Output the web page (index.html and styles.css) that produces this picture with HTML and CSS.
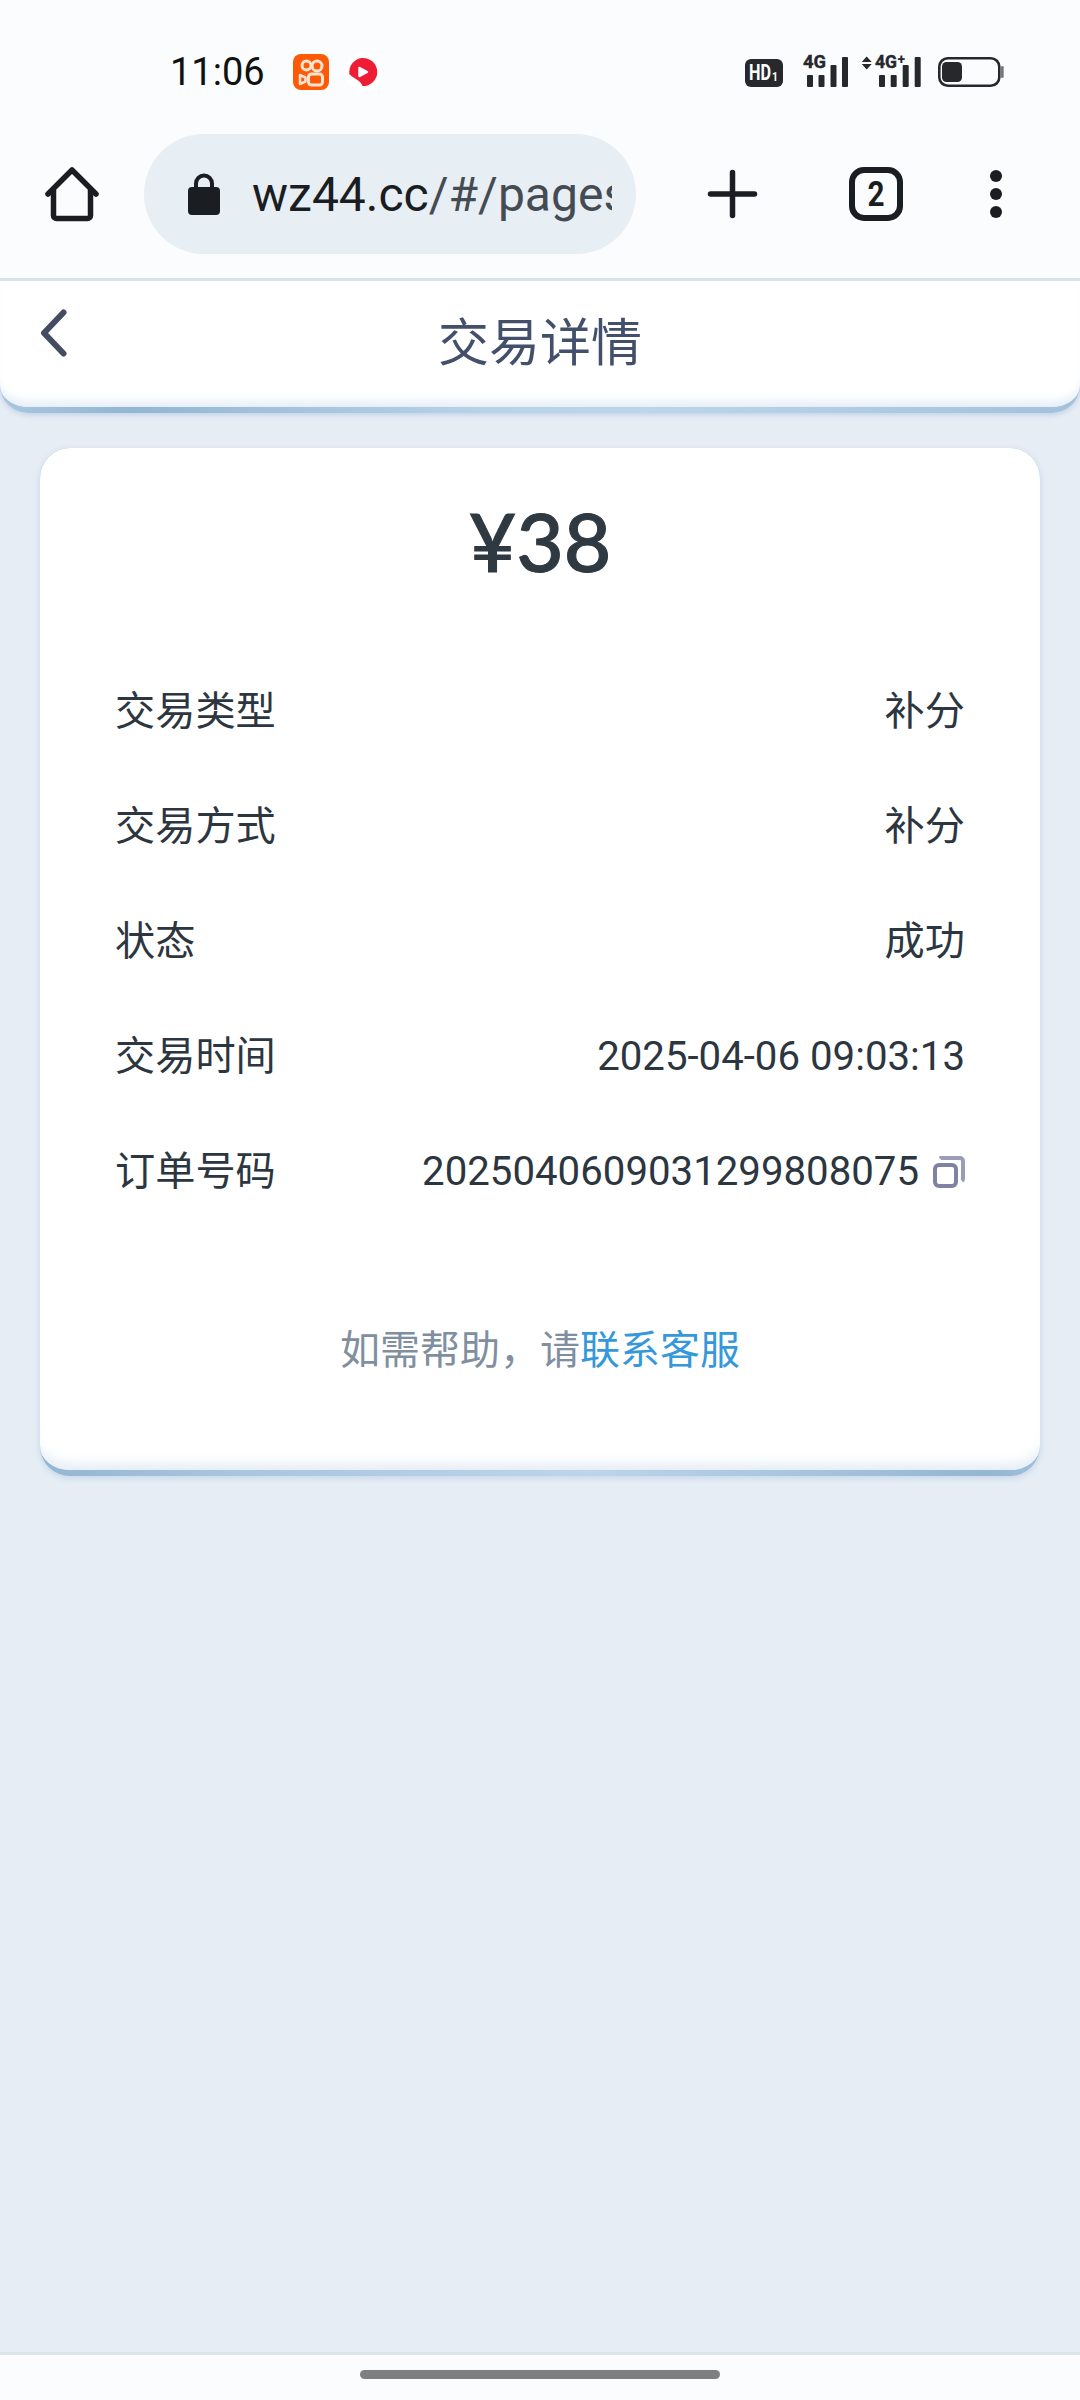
FILE: index.html
```html
<!DOCTYPE html>
<html lang="zh-CN">
<head>
    <meta charset="UTF-8">
    <meta name="viewport" content="width=device-width, initial-scale=1.0">
    <title>交易详情</title>
    <link rel="stylesheet" href="styles.css">
</head>
<body>
    <div class="status-bar">
        <div class="status-time">11:06</div>
        <svg class="app-icon" width="36" height="36" viewBox="0 0 36 36">
            <rect width="36" height="36" rx="8" fill="#fd5a08"/>
            <g fill="none" stroke="#fde3d2" stroke-width="3">
                <circle cx="13.500" cy="11.500" r="4.500"/>
                <circle cx="24" cy="12" r="5"/>
                <rect x="15.500" y="20" width="14" height="11" rx="3"/>
                <path d="M7 21l5.500 2.500v4L7 30z" stroke-linejoin="round" stroke-width="2.500"/>
            </g>
        </svg>
        <svg class="app-icon app-icon-red" width="38" height="38" viewBox="0 0 38 38">
            <circle cx="19" cy="19" r="19" fill="#fff"/>
            <path d="M5.500 21.500A14 14 0 1 1 18.500 33C17 28 11 26 5.500 21.500z" fill="#ee1c35"/>
            <path d="M15.500 15l7.500 4-7.500 4z" fill="#fff" stroke="#fff" stroke-width="2.500" stroke-linejoin="round"/>
        </svg>
        <div class="status-icons">
            <svg width="38" height="28" viewBox="0 0 38 28">
                <rect width="38" height="28" rx="6" fill="#26282b"/>
                <text class="hd-text" x="4" y="21" textLength="22" lengthAdjust="spacingAndGlyphs">HD</text>
                <text class="hd-sub" x="27" y="22" textLength="6" lengthAdjust="spacingAndGlyphs">1</text>
            </svg>
            <svg class="signal-one" width="45" height="32" viewBox="0 0 45 32">
                <text class="net-text" x="0" y="13" textLength="23" lengthAdjust="spacingAndGlyphs">4G</text>
                <rect x="4" y="20" width="6" height="12" rx="1" fill="#26282b"/>
                <rect x="15.500" y="20" width="6" height="12" rx="1" fill="#26282b"/>
                <rect x="27.500" y="10" width="6" height="22" rx="1" fill="#26282b"/>
                <rect x="39" y="2" width="6" height="30" rx="1" fill="#26282b"/>
            </svg>
            <svg class="signal-two" width="60" height="32" viewBox="0 0 60 32">
                <path d="M.7 7l5-5.500 5 5.500zM.7 9l5 5.500 5-5.500z" fill="#26282b"/>
                <text class="net-text" x="14" y="13" textLength="22" lengthAdjust="spacingAndGlyphs">4G</text>
                <text class="net-plus" x="36.500" y="9">+</text>
                <rect x="18" y="20" width="6" height="12" rx="1" fill="#26282b"/>
                <rect x="29.700" y="20" width="6" height="12" rx="1" fill="#26282b"/>
                <rect x="41.700" y="10" width="6" height="22" rx="1" fill="#26282b"/>
                <rect x="53.700" y="2" width="6" height="30" rx="1" fill="#26282b"/>
            </svg>
            <svg class="battery" width="66" height="30" viewBox="0 0 66 30">
                <rect x="1.300" y="1.300" width="60" height="27.400" rx="8.500" fill="none" stroke="#26282b" stroke-width="2.600"/>
                <rect x="4" y="5" width="20" height="20" rx="4.500" fill="#26282b"/>
                <rect x="63" y="9" width="2.700" height="12" rx="1.200" fill="#75787c"/>
            </svg>
        </div>
    </div>

    <div class="toolbar">
        <svg class="home-icon" width="54" height="54" viewBox="0 0 54 54">
            <path d="M3 27L27 3l24 24" fill="none" stroke="#1a1d21" stroke-width="5.500" stroke-linecap="round" stroke-linejoin="round"/>
            <path d="M8.500 23v25.500a3 3 0 0 0 3 3h31a3 3 0 0 0 3-3V23" fill="none" stroke="#1a1d21" stroke-width="5.500"/>
        </svg>
        <div class="url-pill">
            <svg class="lock-icon" width="32" height="42" viewBox="0 0 32 42">
                <path d="M8 17V10.500a8 8 0 0 1 16 0V17" fill="none" stroke="#1a1d21" stroke-width="4"/>
                <rect y="14" width="32" height="28" rx="4" fill="#1a1d21"/>
            </svg>
            <div class="url-text"><span class="url-host">wz44.cc</span>/#/pages</div>
        </div>
        <svg class="plus-icon" width="49" height="48" viewBox="0 0 49 48">
            <path d="M24.500 2.500v43M2.500 24h44" stroke="#1a1d21" stroke-width="5.500" stroke-linecap="round"/>
        </svg>
        <div class="tab-count"><span class="tab-digit">2</span></div>
        <div class="menu-dots"><span></span><span></span><span></span></div>
    </div>

    <div class="page">
        <div class="page-header">
            <svg class="back-icon" width="27" height="48" viewBox="0 0 27 48">
                <path d="M23.500 3.500L4 24l19.500 20.500" fill="none" stroke="#434c60" stroke-width="6" stroke-linecap="round" stroke-linejoin="round"/>
            </svg>
            <div class="page-title">交易详情</div>
        </div>

        <div class="detail-card">
            <div class="amount">¥38</div>
            <div class="detail-list">
                <div class="detail-row">
                    <div>交易类型</div>
                    <div>补分</div>
                </div>
                <div class="detail-row">
                    <div>交易方式</div>
                    <div>补分</div>
                </div>
                <div class="detail-row">
                    <div>状态</div>
                    <div>成功</div>
                </div>
                <div class="detail-row">
                    <div>交易时间</div>
                    <div>2025-04-06 09:03:13</div>
                </div>
                <div class="detail-row">
                    <div>订单号码</div>
                    <div class="order-no">
                        2025040609031299808075
                        <svg class="copy-icon" width="32" height="32" viewBox="0 0 32 32">
                            <path d="M7 2.500a2 2 0 0 1 1-.500h19a3 3 0 0 1 3 3v18a3 3 0 0 1-1 2" fill="none" stroke="#9a9cb8" stroke-width="4"/>
                            <rect x="2" y="9" width="21" height="21" rx="4" fill="#fff" stroke="#7f82a3" stroke-width="4"/>
                        </svg>
                    </div>
                </div>
            </div>
            <div class="help-line">如需帮助，请<span class="help-link">联系客服</span></div>
        </div>
    </div>

    <div class="nav-bar"><div class="home-bar"></div></div>
</body>
</html>
```

FILE: styles.css
```css
* {
    margin: 0;
    padding: 0;
    box-sizing: border-box;
    font-family: 'Roboto', 'Noto Sans CJK SC', sans-serif;
}
body {
    width: 1080px;
    height: 2400px;
    display: flex;
    flex-direction: column;
    background-color: #fbfcfe;
    overflow: hidden;
}
svg {
    display: block;
    flex-shrink: 0;
    overflow: visible;
}

/* Status bar */
.status-bar {
    height: 114px;
    padding: 30px 0 0 170px;
    display: flex;
    align-items: center;
}
.status-time {
    width: 94px;
    font-size: 38px;
    color: #111;
    white-space: nowrap;
}
.app-icon {
    margin-left: 29px;
}
.app-icon-red {
    margin-left: 15px;
}
.status-icons {
    margin-left: auto;
    margin-right: 76px;
    margin-bottom: 2px;
    display: flex;
    align-items: flex-end;
}
.signal-one {
    margin-left: 20px;
}
.signal-two {
    margin-left: 13px;
}
.battery {
    margin-left: 17px;
}
.hd-text, .net-text, .net-plus, .hd-sub {
    font-weight: bold;
}
.hd-text {
    font-size: 22px;
    fill: #fff;
}
.hd-sub {
    font-size: 13px;
    fill: #fff;
}
.net-text {
    font-size: 18.500px;
    fill: #26282b;
    stroke: #26282b;
    stroke-width: 0.4px;
}
.net-plus {
    font-size: 14px;
    fill: #26282b;
}

/* Browser toolbar */
.toolbar {
    height: 167px;
    padding: 0 0 4px 45px;
    display: flex;
    align-items: center;
    border-bottom: 3px solid #dde3ea;
}
.url-pill {
    width: 492px;
    height: 120px;
    margin-left: 45px;
    padding: 0 24px 0 44px;
    display: flex;
    align-items: center;
    gap: 32px;
    background-color: #e7eef4;
    border-radius: 60px;
}
.url-text {
    flex: 1;
    overflow: hidden;
    white-space: nowrap;
    font-size: 48px;
    color: #454b52;
}
.url-host {
    color: #1a1d21;
}
.plus-icon {
    margin-left: 72px;
}
.tab-count {
    width: 54px;
    height: 54px;
    margin-left: 92px;
    border: 6px solid #1a1d21;
    border-radius: 15px;
    display: flex;
    align-items: center;
    justify-content: center;
    color: #1a1d21;
}
.tab-digit {
    font-size: 35px;
    font-weight: bold;
    transform: scaleX(0.85);
}
.menu-dots {
    margin-left: 87px;
    display: flex;
    flex-direction: column;
    gap: 6px;
}
.menu-dots span {
    display: block;
    width: 12px;
    height: 12px;
    border-radius: 50%;
    background-color: #1a1d21;
}

/* Page */
.page {
    flex: 1;
    background-color: #e6edf5;
}
.page-header {
    height: 132px;
    display: grid;
    grid-template-columns: 1fr auto 1fr;
    border-bottom: 6px solid transparent;
    border-radius: 0 0 28px 28px;
    background: linear-gradient(#fff, #fff) padding-box,
        linear-gradient(90deg, #a9c6df 0%, #93b6d3 12%, #b8d2e8 45%, #bcd5ea 60%, #a3c1dc 100%) border-box;
    box-shadow: inset 0 -12px 12px -8px #dfe9f3, 0 2px 5px rgba(150,180,210,0.45);
}
.back-icon {
    margin: 28px 0 0 40px;
}
.page-title {
    margin-top: 33px;
    font-size: 51px;
    line-height: 60px;
    color: #43506b;
}
.detail-card {
    width: 1000px;
    height: 1028px;
    margin: 35px 40px 0;
    padding: 40px 75px 0;
    border-bottom: 6px solid transparent;
    border-radius: 30px;
    background: linear-gradient(#fff, #fff) padding-box,
        linear-gradient(90deg, #93b6d3 0%, #a9c6df 20%, #bcd5ea 55%, #93b6d3 95%, #a3c1dc 100%) border-box;
    box-shadow: inset 0 -14px 14px -9px #dfe9f3, 0 2px 6px rgba(150,180,210,0.4);
}
.amount {
    font-family: 'Lato', 'Roboto', sans-serif;
    font-size: 82px;
    line-height: 104px;
    font-weight: 500;
    text-align: center;
    color: #2f3942;
    -webkit-text-stroke: 1px #2f3942;
}
.detail-list {
    margin-top: 62px;
}
.detail-row {
    height: 115px;
    display: flex;
    justify-content: space-between;
    align-items: center;
    font-size: 40.200px;
    line-height: 60px;
    color: #2c3640;
}
.order-no {
    display: flex;
    align-items: center;
    gap: 14px;
}
.help-line {
    margin-top: 92px;
    font-size: 40px;
    line-height: 60px;
    text-align: center;
    color: #7f8fa0;
}
.help-link {
    color: #3498db;
}

/* Gesture bar */
.nav-bar {
    height: 48px;
    padding-top: 15px;
    border-top: 3px solid #dde4ec;
}
.home-bar {
    width: 360px;
    height: 9px;
    margin: 0 auto;
    border-radius: 5px;
    background-color: #7f7f7f;
}
```
